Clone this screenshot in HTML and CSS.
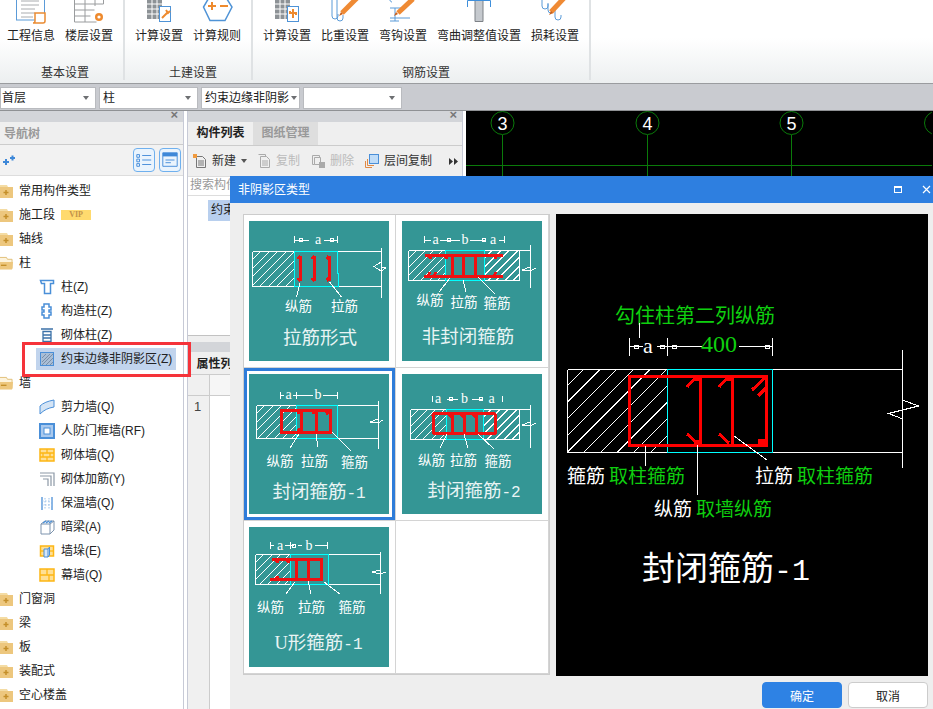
FILE: index.html
```html
<!DOCTYPE html>
<html lang="zh-CN">
<head>
<meta charset="utf-8">
<title>非阴影区类型</title>
<link rel="stylesheet" href="styles.css">
</head>
<body>
<svg class="defs" width="0" height="0" aria-hidden="true">
  <defs>
    <path id="hl6" class="hl" d="M8 0L-92 100M17 0L-83 100M25 0L-75 100M34 0L-66 100M42 0L-58 100M51 0L-49 100M59 0L-41 100M68 0L-32 100M76 0L-24 100M85 0L-15 100"/>
    <path id="hl12" class="hl" d="M16 0L-84 100M32.500 0L-67.500 100M49 0L-51 100M66 0L-34 100M82.500 0L-17.500 100M99 0L-1 100M116 0L16 100M132.500 0L32.500 100M149 0L49 100M166 0L66 100M182.500 0L82.500 100"/>
    <symbol id="fplus" viewBox="0 0 13 14"><path class="f1" d="M-2 1h9l1 2h5v11H-2z"/><path class="f2" d="M-2 3h15v11H-2z"/><path class="f3" d="M6 6v5M3.500 8.500h5"/></symbol>
    <symbol id="fminus" viewBox="0 0 14 14"><path class="f4" d="M-2 1h9l1 2h5v10H-2z"/><path class="f2" d="M-2 6h16l-1 8H-2z"/><path class="f3" d="M1 9.500h6"/></symbol>
  </defs>
</svg>

<header class="ribbon">
  <section class="group g1">
    <div class="items">
      <div class="item"><svg class="ri" viewBox="0 0 48 28"><rect class="b1" x="9.500" y="-4" width="28" height="24"/><path class="g-l" d="M14 1h18M14 5h18M14 9h14M14 13h14M14 17h12"/><path class="o1" d="M28 13h10v8c0 2-2 2-2 2H26c2 0 2-2 2-2z"/></svg><span>工程信息</span></div>
      <div class="item"><svg class="ri" viewBox="0 0 48 28"><path class="gln" d="M9.500-4v26h22M9.500 4h29M9.500 10h20M9.500 16h16M20 -4v26M30-4v10M38.500-4v8"/><circle class="o2" cx="34" cy="17" r="4"/><circle class="o3" cx="34" cy="17" r="1.600"/></svg><span>楼层设置</span></div>
    </div>
    <h2>基本设置</h2>
  </section>
  <section class="group g2">
    <div class="items">
      <div class="item"><svg class="ri" viewBox="0 0 48 28"><rect class="gf" x="12" y="-2" width="15" height="21"/><path class="wl" d="M12 4h15M12 9h15M12 14h15M17 -2v21M22 -2v21"/><rect class="bx" x="24.500" y="6.500" width="11" height="15"/><path class="o4" d="M27 18l5-5M31 10l2 3 2-2"/></svg><span>计算设置</span></div>
      <div class="item"><svg class="ri" viewBox="0 0 48 28"><path class="b2" d="M17-4h15l7 11-7 13.500H17L10.500 7z"/><path class="o5" d="M15 6h8M19 2v8M27 6h8"/></svg><span>计算规则</span></div>
    </div>
    <h2>土建设置</h2>
  </section>
  <section class="group g3">
    <div class="items">
      <div class="item"><svg class="ri" viewBox="0 0 48 28"><rect class="gf" x="12" y="-2" width="15" height="21"/><path class="wl" d="M12 4h15M12 9h15M12 14h15M17 -2v21M22 -2v21"/><rect class="bx" x="24.500" y="6.500" width="11" height="15"/><path class="o4" d="M30 9v9M27 13h6M27 11v3M33 15v-3"/></svg><span>计算设置</span></div>
      <div class="item"><svg class="ri" viewBox="0 0 48 28"><path class="h1" d="M11-4v20a3 3 0 0 0 6 0v-2M16-4v22a3 3 0 0 0 6 0v-3"/><path class="pen" d="M21 13L36-2"/><path class="pen-t" d="M18 16l2-4 2 2z"/></svg><span>比重设置</span></div>
      <div class="item"><svg class="ri" viewBox="0 0 48 28"><path class="h1" d="M13-4c-3 0-3 6 0 6M11 8h16M11 18h20M16 8v13M11 21h9"/><path class="pen" d="M19 13L34-1"/><path class="pen-t" d="M15 16l2-4 2 2z"/></svg><span>弯钩设置</span></div>
      <div class="item wide"><svg class="ri" viewBox="0 0 84 28"><path class="gc" d="M38-4h8v25.500h-8z"/><path class="h2" d="M30.500 7V0.500h23V7"/></svg><span>弯曲调整值设置</span></div>
      <div class="item"><svg class="ri" viewBox="0 0 48 28"><path class="h1" d="M11-4v10a3 3 0 0 0 6 0v-2M17 3v7a3 3 0 0 0 6 0M24 8v9a3 3 0 0 0 6 0v-2"/><path class="pen" d="M20 12L34-3"/><path class="pen-t" d="M18 15l2-4 2 2z"/></svg><span>损耗设置</span></div>
    </div>
    <h2>钢筋设置</h2>
  </section>
</header>

<div class="filters">
  <div class="sel s1"><span>首层</span><i class="caret"></i></div>
  <div class="sel"><span>柱</span><i class="caret"></i></div>
  <div class="sel s3"><span>约束边缘非阴影</span><i class="caret"></i></div>
  <div class="sel"><span></span><i class="caret"></i></div>
</div>

<main class="workspace">
  <aside class="nav">
    <div class="phead"><span class="px">×</span></div>
    <div class="navtitle">导航树</div>
    <div class="navtools">
      <svg class="sparkle" viewBox="0 0 14 12"><path d="M1 8h6M4 5v6M8 4h5M10.500 1.500v5"/></svg>
      <span class="tbtn"><svg viewBox="0 0 20 20"><path class="tb" d="M2 4h3v3H2zM2 9h3v3H2zM2 14h3v3H2zM8 5h10M8 10h10M8 15h10"/></svg></span>
      <span class="tbtn"><svg viewBox="0 0 20 20"><path class="tb" d="M2 2h16v15H2z"/><path class="tbf" d="M2 2h16v4H2z"/><path class="tb" d="M5 10h10M5 13h6"/></svg></span>
    </div>
    <ul class="tree">
      <li class="r1"><svg class="fd"><use href="#fplus"/></svg>常用构件类型</li>
      <li class="r1"><svg class="fd"><use href="#fplus"/></svg>施工段<b class="vip">VIP</b></li>
      <li class="r1"><svg class="fd"><use href="#fplus"/></svg>轴线</li>
      <li class="r1"><svg class="fd"><use href="#fminus"/></svg>柱</li>
      <li class="r2"><div class="in"><svg class="ic" viewBox="0 0 16 16"><path class="ib" d="M1.500 1.500h13v3h-3v10h-6v-10h-3z"/></svg>柱(Z)</div></li>
      <li class="r2"><div class="in"><svg class="ic" viewBox="0 0 16 16"><path class="ib" d="M5 1h5v3h2v3h-2v2h2v3h-2v3H5v-3H3V9h2V7H3V4h2z"/></svg>构造柱(Z)</div></li>
      <li class="r2"><div class="in"><svg class="ic" viewBox="0 0 16 16"><path class="ib2" d="M2 2h12M4 4.500h8v10H4zM4 8h8M4 11h8"/></svg>砌体柱(Z)</div></li>
      <li class="r2 on"><div class="in"><svg class="ic" viewBox="0 0 16 16"><rect class="ih" x="1.500" y="1.500" width="13" height="13"/><path class="ihl" d="M3 7l4-4M3 11l8-8M3 14L14 3M7 14l7-7M11 14l3-3"/></svg>约束边缘非阴影区(Z)</div></li>
      <li class="r1"><svg class="fd"><use href="#fminus"/></svg>墙</li>
      <li class="r2"><div class="in"><svg class="ic" viewBox="0 0 16 16"><path class="iw" d="M1 7c3-3 8-5 14-6v7C9 9 5 11 1 15z"/></svg>剪力墙(Q)</div></li>
      <li class="r2"><div class="in"><svg class="ic" viewBox="0 0 16 16"><rect class="irf" x="1" y="1" width="14" height="14"/><rect class="irf2" x="5" y="5" width="6" height="6"/></svg>人防门框墙(RF)</div></li>
      <li class="r2"><div class="in"><svg class="ic" viewBox="0 0 16 16"><rect class="ibr" x="1" y="2" width="14" height="12"/><path class="ibl" d="M1 6h14M1 10h14M8 2v4M4 6v4M11 6v4M8 10v4"/></svg>砌体墙(Q)</div></li>
      <li class="r2"><div class="in"><svg class="ic" viewBox="0 0 16 16"><path class="ig" d="M1 2h14v13M1 5h11v10M4 8h5v7"/></svg>砌体加筋(Y)</div></li>
      <li class="r2"><div class="in"><svg class="ic" viewBox="0 0 16 16"><path class="ibd" d="M3 2v13M13 2v13"/><path class="ibd2" d="M6 3v11M10 3v11M3 6h10M3 10h10"/></svg>保温墙(Q)</div></li>
      <li class="r2"><div class="in"><svg class="ic" viewBox="0 0 16 16"><path class="ibx" d="M2 5h9v10H2zM2 5l4-3h9l-4 3M11 15l4-4V2"/><path class="ibd" d="M4 4l3-2M7 4l3-2M10 4l3-2"/></svg>暗梁(A)</div></li>
      <li class="r2"><div class="in"><svg class="ic" viewBox="0 0 16 16"><rect class="ibr" x="1.500" y="3" width="13" height="10"/><path class="ibl" d="M1.500 8h13"/><path class="ipil" d="M5 6h4v8H5zM9 6l1.500-2v8L9 14"/></svg>墙垛(E)</div></li>
      <li class="r2"><div class="in"><svg class="ic" viewBox="0 0 16 16"><rect class="ibr" x="1" y="2" width="14" height="12"/><path class="ibl" d="M1 8h14M8 2v6M10 8v6"/></svg>幕墙(Q)</div></li>
      <li class="r1"><svg class="fd"><use href="#fplus"/></svg>门窗洞</li>
      <li class="r1"><svg class="fd"><use href="#fplus"/></svg>梁</li>
      <li class="r1"><svg class="fd"><use href="#fplus"/></svg>板</li>
      <li class="r1"><svg class="fd"><use href="#fplus"/></svg>装配式</li>
      <li class="r1"><svg class="fd"><use href="#fplus"/></svg>空心楼盖</li>
    </ul>
    <div class="redbox"></div>
  </aside>

  <section class="mid">
    <div class="phead"><span class="px">×</span></div>
    <div class="tabs"><span class="tab active">构件列表</span><span class="tab">图纸管理</span></div>
    <div class="mtools">
      <span class="mt m-new"><svg class="mi" viewBox="0 0 14 14"><path class="mg" d="M3.500 2.500h6l3 3v8h-9z"/><path class="mg" d="M5 7h6M5 9h6M5 11h6"/><rect class="mo" x="0" y="0" width="4" height="4"/></svg>新建<i class="caret dk"></i></span>
      <span class="mt dis"><svg class="mi" viewBox="0 0 14 14"><path class="ml" d="M1.500.5h7v2M3.500 2.500h6l3 3v8h-9zM5 7h6M5 9h6M5 11h6"/></svg>复制</span>
      <span class="mt dis"><svg class="mi" viewBox="0 0 14 14"><path class="ml" d="M1.500 1.500h7v2M1.500 1.500v9h2M3.500 3.500h6v7h-6z"/><rect class="mgr" x="8" y="8" width="6" height="6"/></svg>删除</span>
      <span class="mt"><svg class="mi" viewBox="0 0 14 14"><path class="mor" d="M.5 7v6.500H7M2.500 5v6.500H9"/><rect class="mbl" x="4.500" y=".5" width="9" height="9"/></svg>层间复制</span>
      <svg class="more" viewBox="0 0 9 7"><path d="M0 0l4 3.500L0 7zM5 0l4 3.500L5 7z"/></svg>
    </div>
    <div class="search">搜索构件</div>
    <div class="list"><span class="li-sel">约束边缘非阴影区-1</span></div>
    <div class="gap"></div>
    <div class="phead short"></div>
    <div class="tabs t2"><span class="tab active">属性列表</span></div>
    <div class="pgrid">
      <div class="pr head"><span></span><span></span></div>
      <div class="pr"><span>1</span><span></span></div>
      <div class="pr fill"><span></span><span></span></div>
    </div>
  </section>

  <section class="canvas">
    <svg viewBox="0 0 466 66" width="466" height="66">
      <line class="gl" x1="0" y1="54.500" x2="466" y2="54.500"/>
      <line class="gl" x1="36.500" y1="24" x2="36.500" y2="66"/>
      <line class="gl" x1="181.500" y1="24" x2="181.500" y2="66"/>
      <line class="gl" x1="325.500" y1="24" x2="325.500" y2="66"/>
      <circle class="gl" cx="36.500" cy="12" r="11.500"/>
      <circle class="gl" cx="181.500" cy="12" r="11.500"/>
      <circle class="gl" cx="325.500" cy="12" r="11.500"/>
      <circle class="gl" cx="470" cy="12" r="11.500"/>
      <text class="axis" x="36.500" y="18.500">3</text>
      <text class="axis" x="181.500" y="18.500">4</text>
      <text class="axis" x="325.500" y="18.500">5</text>
    </svg>
  </section>
</main>

<div class="dialog">
  <div class="dtitle"><span>非阴影区类型</span><i class="dmax"></i><svg class="dclose" viewBox="0 0 9 9"><path d="M1 1l7 7M8 1L1 8"/></svg></div>
  <div class="dbody">
    <div class="choices">
      <div class="cell">
        <svg class="card" viewBox="0 0 140 140">
          <svg x="3.500" y="30.500" width="41.500" height="35"><use href="#hl6"/></svg>
          <path class="w" d="M3.500 30.500h129.500M3.500 65.500h129.500M3.500 30.500v35M132.500 26.500v50M132 41l-7 4.500 7 4.500 5-3-5-1"/>
          <path class="c" d="M45 30.500h43.500v22h1v13H45z"/>
          <path class="w" d="M45.500 15v7M88.500 15v7M45.500 19h14M75 19h13.500M50 17.500h3v3h-3zM81 17.500h3v3h-3z"/>
          <text class="dim" x="69" y="23">a</text>
          <path class="r" d="M51.500 35v25M65.500 35v25M80 35v25M49 38l2.500-3M63 38l2.500-3M77.500 38l2.500-3M49 57l2.500 3M63 57l2.500 3M77.500 57l2.500 3"/>
          <path class="w1" d="M51 62l-3.500 14M80.500 61l12 15"/>
          <text class="lb" x="49.500" y="90">纵筋</text><text class="lb" x="95.500" y="90">拉筋</text>
          <text class="tt" x="71" y="123">拉筋形式</text>
        </svg>
      </div>
      <div class="cell">
        <svg class="card" viewBox="0 0 140 140">
          <svg x="6.500" y="29.500" width="37.500" height="30"><use href="#hl6"/></svg>
          <svg x="82" y="29.500" width="35.500" height="30"><use href="#hl6"/></svg>
          <path class="w" d="M6.500 29.500h122M6.500 59.500h111M6.500 29.500v30M117.500 29.500v30M128.500 24v42.500M128 46l-8 3 8 1 6-3"/>
          <rect class="c" x="43.500" y="29.500" width="38.500" height="30"/>
          <path class="w" d="M22.500 15v7M102 15v7M22.500 19h6M38 19h20M68 19h15M97 19h5M45 17.500h3v3h-3zM80 17.500h3v3h-3z"/>
          <text class="dim" x="33.500" y="23">a</text><text class="dim" x="63" y="23">b</text><text class="dim" x="91" y="23">a</text>
          <path class="r" d="M23 34h78M21.500 55h79.500M50 34v21M61.500 34v21M73.500 34v21M26 34l3 4M42 34l3 4M92 34l2 4M26 55l2-4M32 55l2-4M92 55l2-4"/>
          <path class="w1" d="M48 57L37 71M61 59l3 12M76 56l17 17"/>
          <text class="lb" x="28" y="84">纵筋</text><text class="lb" x="62" y="86">拉筋</text><text class="lb" x="95" y="87">箍筋</text>
          <text class="tt" x="66" y="122">非封闭箍筋</text>
        </svg>
      </div>
      <div class="cell sel-cell">
        <svg class="card" viewBox="0 0 140 140">
          <svg x="7.500" y="31.500" width="40" height="33"><use href="#hl6"/></svg>
          <path class="w" d="M7.500 31.500h122M7.500 64.500h122M7.500 31.500v33M129.500 27v47.500M129 45l-8 3 8 1 5-3"/>
          <rect class="c" x="47.500" y="31.500" width="41" height="33"/>
          <path class="w" d="M31.500 18v7M47.500 18v7M88.500 18v7M31.500 21h3M44 21h3.500M47.500 21h16M74 21h14.500"/>
          <text class="dim" x="39.500" y="25">a</text><text class="dim" x="69" y="25">b</text>
          <rect class="r" x="32" y="36" width="49" height="22.500"/>
          <path class="r" d="M52.500 36v22.500M67.500 36v22.500M49 40l3-4M64 40l3-4M77 40l4-3M49 55l3 3"/>
          <path class="w1" d="M50 60L41 74M67 60l2 13M83 58l19 19"/>
          <text class="lb" x="31" y="92">纵筋</text><text class="lb" x="65.500" y="92">拉筋</text><text class="lb" x="105.500" y="93">箍筋</text>
          <text class="tt" x="70" y="124">封闭箍筋<tspan class="tm">-1</tspan></text>
        </svg>
      </div>
      <div class="cell">
        <svg class="card" viewBox="0 0 140 140">
          <svg x="8.500" y="35.500" width="36" height="30"><use href="#hl6"/></svg>
          <svg x="81" y="35.500" width="36.500" height="30"><use href="#hl6"/></svg>
          <path class="w" d="M8.500 35.500h120M8.500 65.500h109M8.500 35.500v30M117.500 35.500v30M128.500 31v43M128 48l-8 3 8 1 6-3"/>
          <rect class="c" x="44.500" y="35.500" width="37" height="30"/>
          <path class="w" d="M30.500 22v6M100 22v6M45 25h11M70 25h10M47 23.500h3v3h-3zM77 23.500h3v3h-3z"/>
          <text class="dim" x="36" y="29">a</text><text class="dim" x="62.500" y="29">b</text><text class="dim" x="89.500" y="29">a</text>
          <rect class="r" x="31" y="39.500" width="62.500" height="20" rx="2"/>
          <path class="r" d="M50.500 39.500v20M62.500 39.500v20M74.500 39.500v20M47 43l3-3M59 43l3-3M71 43l3-3"/>
          <path class="w1" d="M45 60L38 74M62 60l4 14M76 60l16 15"/>
          <text class="lb" x="29.500" y="91">纵筋</text><text class="lb" x="61.500" y="91">拉筋</text><text class="lb" x="96" y="92">箍筋</text>
          <text class="tt" x="72" y="123">封闭箍筋<tspan class="tm">-2</tspan></text>
        </svg>
      </div>
      <div class="cell">
        <svg class="card" viewBox="0 0 140 140">
          <svg x="6.500" y="27.500" width="35" height="30"><use href="#hl6"/></svg>
          <path class="w" d="M6.500 27.500h125M6.500 57.500h125M6.500 27.500v30M131.500 24.500v42M131 43l-8 2 8 2 6-2"/>
          <rect class="c" x="41.500" y="27.500" width="38" height="30"/>
          <path class="w" d="M21.500 15v7M41 15v7M78 15v7M22 18.500h3M36 18.500h9M49 18.500h4M66 18.500h12M43 17h3v3h-3z"/>
          <text class="dim" x="31" y="23">a</text><text class="dim" x="60" y="23">b</text>
          <path class="r" d="M22.500 32.500H72V52H20.500M47.500 32.500V52M59.500 32.500V52M27 33l2 3M38 33l2 3M27 52l2-3"/>
          <path class="w1" d="M46 55L37 67M59 54l3 13M75 55l16 12"/>
          <text class="lb" x="21.500" y="85">纵筋</text><text class="lb" x="62.500" y="85">拉筋</text><text class="lb" x="103" y="85">箍筋</text>
          <text class="tt" x="69.500" y="122">U形箍筋<tspan class="tm">-1</tspan></text>
        </svg>
      </div>
      <div class="cell"></div>
    </div>
    <div class="preview">
      <svg viewBox="0 0 372 462" width="372" height="462">
        <svg x="11.500" y="155.500" width="100" height="83"><use href="#hl12"/></svg>
        <path class="w" d="M11.500 155.500h335M11.500 238.500h335M11.500 155.500v83M346.500 136v118M346.500 186l16 6-30 7.500 14.500 5.500"/>
        <rect class="c" x="111.500" y="155.500" width="105" height="83"/>
        <text class="gt gt-l" x="139" y="109">勾住柱第二列纵筋</text>
        <path class="w" d="M83.500 109v15M73.500 124v18M111.500 124v18M216.500 124v18M73.500 132.500h13M101 132.500h10M111.500 132.500h34M183 132.500h33M78 131h4v3h-4zM104 131h4v3h-4zM116 131h4v3h-4zM209 131h4v3h-4z"/>
        <text class="wt wa" x="92" y="139">a</text>
        <text class="gt num" x="163" y="138">400</text>
        <rect class="rb" x="73.500" y="162.500" width="137" height="69"/>
        <path class="rb" d="M144.500 162v69M176.500 162v69"/>
        <path class="r2s" d="M131 173l10-11M163 173l10-11M196 176l13-12M202 182l9-9M131 220l10 9M163 220l10 9"/>
        <path class="rd" d="M138 161h6v6h-6zM170 161h6v6h-6zM138 226h6v6h-6zM202 225h7v7h-7z"/>
        <path class="w1" d="M89.500 232v20M141.500 231v50M178 222l33 24"/>
        <text class="wt mid-t" x="11" y="269">箍筋</text><text class="gt mid-t" x="53" y="269">取柱箍筋</text>
        <text class="wt mid-t" x="199" y="269">拉筋</text><text class="gt mid-t" x="241" y="269">取柱箍筋</text>
        <text class="wt mid-t" x="98" y="302">纵筋</text><text class="gt mid-t" x="140" y="302">取墙纵筋</text>
        <text class="wt big" x="86" y="366">封闭箍筋<tspan class="tm2">-1</tspan></text>
      </svg>
    </div>
  </div>
  <div class="dfoot"><button class="btn pri">确定</button><button class="btn">取消</button></div>
</div>
</body>
</html>
```

FILE: styles.css
```css
* { box-sizing: border-box; }
html, body { margin: 0; padding: 0; }
body {
  width: 933px; height: 709px; overflow: hidden; position: relative; background: #fff; color: #222;
  font: 12px/16px "Liberation Sans", "Noto Sans CJK SC", sans-serif;
}
.defs { position: absolute; }
.hl { stroke: #fff; stroke-width: 1; fill: none; }
ul { list-style: none; margin: 0; padding: 0; }

/* ribbon */
.ribbon { display: flex; height: 84px; border-bottom: 1px solid #9a9c9f; background: linear-gradient(#fff 0, #fff 38px, #eceff0 83px); }
.group { display: flex; flex-direction: column; border-right: 2px solid #dfe2e4; height: 80px; }
.g1 { width: 125px; padding-left: 7px; }
.g2 { width: 128px; padding-left: 10px; }
.g3 { width: 338px; padding-left: 10px; }
.items { display: flex; gap: 10px; height: 65px; flex: none; }
.item { width: 48px; display: flex; flex-direction: column; align-items: center; color: #222; }
.item.wide { width: 84px; }
.item span { white-space: nowrap; line-height: 16px; }
.ri { width: 100%; height: 28px; display: block; flex: none; }
.group h2 { margin: 0; font-size: 12px; font-weight: 400; line-height: 16px; text-align: center; color: #333; }
.b1 { fill: #fff; stroke: #5b9bd8; }
.g-l { stroke: #a9acaf; fill: none; }
.o1 { fill: #fff; stroke: #e98b32; stroke-width: 1.500; }
.gln { fill: none; stroke: #9a9c9e; }
.o2 { fill: #ee8a2e; }
.o3 { fill: #fff; }
.gf { fill: #8d9296; }
.wl { stroke: #fff; fill: none; }
.bx { fill: #fff; stroke: #4f93d6; }
.o4 { stroke: #ee8a2e; stroke-width: 2; fill: none; }
.b2 { fill: #fff; stroke: #4f93d6; stroke-width: 1.500; }
.o5 { stroke: #ee8a2e; stroke-width: 2; fill: none; }
.h1 { fill: none; stroke: #5b9bd8; }
.pen { stroke: #ef8a34; stroke-width: 5; fill: none; }
.pen-t { fill: #c95f1a; }
.gc { fill: #c5c9ce; stroke: #7d8186; }
.h2 { fill: none; stroke: #3f8fdb; }

/* filters */
.filters { display: flex; gap: 3px; height: 27px; padding: 3px 0 2px; background: #c9cbd0; border-bottom: 1px solid #8f9194; }
.sel { width: 99px; height: 22px; background: #fff; border: 1px solid #b9bbbf; display: flex; align-items: center; justify-content: space-between; padding: 0 6px 0 3px; color: #222; }
.sel span { white-space: nowrap; }
.s1 { width: 96px; padding-left: 1px; }
.s3 { padding-right: 2px; }
.caret { display: inline-block; flex: none; width: 0; height: 0; border-left: 3.500px solid transparent; border-right: 3.500px solid transparent; border-top: 4px solid #6d6f72; }
.caret.dk { border-top-color: #555; }

/* workspace */
.workspace { display: flex; height: 598px; background: #fff; }
.nav { width: 184px; border-right: 1px solid #c7cad6; position: relative; }
.phead { height: 11px; background: #d3d5d9; position: relative; }
.px { position: absolute; right: 5px; top: -3px; line-height: 14px; color: #777; font-size: 13px; font-weight: 700; }
.navtitle { height: 23px; line-height: 24px; background: #efefef; border-bottom: 1px solid #ccc; color: #999; font-weight: 700; padding-left: 4px; }
.navtools { height: 31px; background: #f2f2f2; border-bottom: 1px solid #ddd; display: flex; align-items: center; gap: 4px; padding: 0 2px; }
.sparkle { width: 14px; height: 12px; margin-right: auto; fill: none; stroke: #3e88d8; stroke-width: 2; }
.tbtn { width: 22px; height: 24px; border: 1px solid #6fb0ee; border-radius: 4px; background: #eaf4fd; display: flex; align-items: center; justify-content: center; }
.tbtn svg { width: 18px; height: 18px; }
.tb { fill: none; stroke: #3e88d8; }
.tbf { fill: #3e88d8; }
.tree { padding-top: 3px; }
.tree li { height: 24px; display: flex; align-items: center; white-space: nowrap; color: #222; }
.r1 { gap: 6px; }
.fd { width: 13px; height: 14px; flex: none; }
.f1 { fill: #f4dca4; }
.f2 { fill: #edc77e; }
.f3 { stroke: #c48f2a; stroke-width: 1.500; fill: none; }
.f4 { fill: #fdf3dc; stroke: #e0bd74; }
.vip { width: 30px; height: 10px; background: #ffda6e; color: #c2924a; font: 700 8px/10px "Liberation Serif", serif; text-align: center; }
.r2 { padding-left: 36px; }
.in { display: flex; align-items: center; gap: 6px; width: 140px; height: 22px; padding-left: 3px; flex: none; }
.on .in { background: #c1d4ed; }
.ic { width: 16px; height: 16px; flex: none; }
.ib { fill: #fff; stroke: #4a8fd8; stroke-width: 1.500; }
.ib2 { fill: #fff; stroke: #3c72a8; stroke-width: 1.300; }
.ih { fill: #a9bed6; stroke: #4a8fd8; }
.ihl { stroke: #7a8fa8; fill: none; }
.iw { fill: #d4e4f5; stroke: #4a8fd8; }
.irf { fill: #a9c9ee; stroke: #4a8fd8; stroke-width: 2; }
.irf2 { fill: #fff; stroke: #4a8fd8; }
.ibr { fill: #ffdf94; stroke: #fdb614; stroke-width: 1.500; }
.ibl { fill: none; stroke: #fdb614; stroke-width: 1.300; }
.ig { fill: none; stroke: #8c98a6; stroke-width: 1.200; }
.ibd { fill: none; stroke: #4a8fd8; stroke-width: 1.300; }
.ibd2 { fill: none; stroke: #9cc1e9; stroke-dasharray: 1.500 1.500; }
.ibx { fill: #fff; stroke: #7c93ad; }
.ipil { fill: #d7e7f7; stroke: #4a8fd8; }
.redbox { position: absolute; left: 22px; top: 231px; width: 169px; height: 35px; border: 3px solid #f5333a; z-index: 3; }

/* middle */
.mid { width: 276px; margin-left: 3px; border-left: 1px solid #c7cad6; border-right: 1px solid #c7cad6; background: #efefef; display: flex; flex-direction: column; }
.tabs { height: 24px; display: flex; border-bottom: 1px solid #ccc; background: #efefef; flex: none; }
.tab { width: 65px; text-align: center; line-height: 23px; font-weight: 700; color: #999; background: #dedede; }
.tab.active { background: #efefef; color: #222; }
.mtools { height: 30px; display: flex; align-items: center; padding-left: 5px; flex: none; }
.mt { display: flex; align-items: center; gap: 5px; margin-right: 11px; color: #333; white-space: nowrap; }
.m-new { margin-right: 10px; }
.dis { color: #bbb; }
.mi { width: 14px; height: 14px; flex: none; }
.mg { fill: none; stroke: #777; }
.mo { fill: #f09a3e; }
.ml { fill: none; stroke: #aaa; }
.mgr { fill: #aaa; }
.mor { fill: none; stroke: #e08a46; }
.mbl { fill: #bfdcf8; stroke: #4a8fd8; }
.more { width: 9px; height: 7px; margin-left: auto; margin-right: 4px; fill: #333; }
.search { height: 20px; background: #fff; border: 1px solid #ddd; border-width: 1px 0; line-height: 17px; padding-left: 2px; color: #999; flex: none; overflow: hidden; }
.list { height: 140px; background: #fff; border-bottom: 1px solid #c2c2c2; padding: 4px 0 0 20px; overflow: hidden; flex: none; }
.li-sel { display: block; width: 140px; height: 21px; background: #b8cfee; line-height: 21px; padding-left: 3px; white-space: nowrap; }
.gap { height: 6px; flex: none; }
.phead.short { height: 10px; flex: none; }
.t2 { height: 23px; }
.t2 .tab { line-height: 24px; }
.pgrid { flex: 1; display: flex; flex-direction: column; }
.pr { display: grid; grid-template-columns: 22px 1fr; height: 21px; border-bottom: 1px solid #ccc; }
.pr span { background: #fff; }
.pr span:first-child { background: #f0f0f0; border-right: 1px solid #ccc; padding-left: 6px; line-height: 21px; font-size: 13px; color: #444; }
.pr.head span:nth-child(2) { background: #f6f6f6; }
.pr.fill { flex: 1; border-bottom: 0; }

/* canvas */
.canvas { flex: 1; margin-left: 3px; background: #000; }
.canvas svg { display: block; }
.gl { fill: none; stroke: #0a7a0a; stroke-width: 1; }
.axis { fill: #fff; font: 18px "Liberation Sans", sans-serif; text-anchor: middle; }

/* dialog */
.dialog { position: absolute; left: 230px; top: 176px; width: 703px; height: 533px; background: #eee; z-index: 5; display: flex; flex-direction: column; }
.dtitle { height: 27px; background: #2e7fe0; color: #fff; display: flex; align-items: center; padding-left: 8px; flex: none; position: relative; }
.dmax { position: absolute; left: 664px; top: 10px; width: 8px; height: 7px; border: 1px solid #fff; border-top-width: 2px; }
.dclose { position: absolute; left: 692px; top: 9px; width: 9px; height: 9px; fill: none; stroke: #fff; stroke-width: 1.200; }
.dbody { display: flex; gap: 6px; padding: 11px 5px 0 13px; height: 473px; flex: none; }
.choices { width: 307px; height: 461px; background: #fff; border: 1px solid #ccc; display: grid; grid-template-columns: 152px 153px; grid-template-rows: repeat(3, 153px); }
.cell { padding: 6px 0 0 5px; border-right: 1px solid #d4d4d4; border-bottom: 1px solid #d4d4d4; }
.cell:nth-child(even) { padding-left: 6px; }
.sel-cell { box-shadow: inset 0 0 0 3px #2e7cd9; }
.card { width: 140px; height: 140px; display: block; background: #349695; shape-rendering: crispEdges; }
.preview { width: 372px; height: 462px; background: #000; }
.preview svg { display: block; shape-rendering: crispEdges; }
.w { fill: none; stroke: #fff; }
.w1 { fill: none; stroke: #fff; stroke-width: 1; }
.c { fill: none; stroke: #0ff; }
.r { fill: none; stroke: #f01010; stroke-width: 3; }
.rb { fill: none; stroke: #f00; stroke-width: 3.500; }
.r2s { fill: none; stroke: #f00; stroke-width: 3; }
.rd { fill: #f00; }
.dim, .lb, .tt, .gt, .wt { font-family: "Liberation Serif", "Noto Sans CJK SC", serif; }
.dim { fill: #fff; font-size: 14px; text-anchor: middle; }
.lb { fill: #fff; font-size: 13.500px; text-anchor: middle; }
.tt { fill: #e8f4f4; font-size: 18.500px; text-anchor: middle; }
.tm { font-family: "Liberation Mono", monospace; font-size: 16px; }
.gt { fill: #0fcf0f; }
.gt-l { font-size: 20px; text-anchor: middle; }
.num { font-size: 24px; text-anchor: middle; }
.wt { fill: #fff; }
.wa { font-size: 22px; text-anchor: middle; }
.mid-t { font-size: 19px; }
.big { font-size: 33px; }
.tm2 { font-family: "Liberation Mono", monospace; font-size: 30px; }
.dfoot { display: flex; justify-content: flex-end; gap: 6px; padding: 6px 5px 0 0; }
.btn { width: 80px; height: 26px; border: 1px solid #ccc; border-radius: 4px; background: #fff; color: #222; font: 12px "Liberation Sans", "Noto Sans CJK SC", sans-serif; padding: 0; }
.btn.pri { background: #2e82e4; border-color: #2e82e4; color: #fff; }
```
